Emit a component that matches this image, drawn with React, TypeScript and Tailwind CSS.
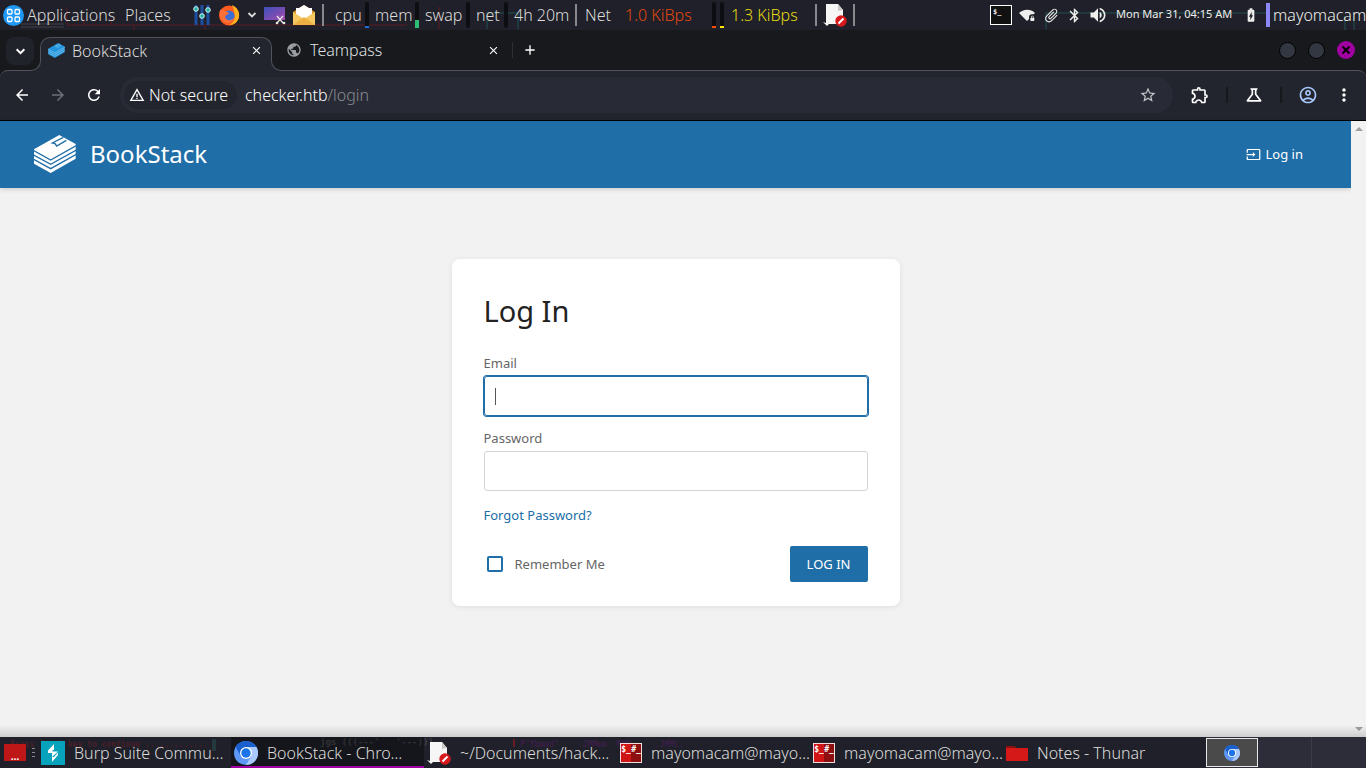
import { useState } from "react";
import type { ReactNode } from "react";
import {
  MdAdd, MdArrowBack, MdArrowForward, MdAttachFile, MdBatteryChargingFull, MdBluetooth, MdClose,
  MdInput, MdMoreVert, MdOutlineAccountCircle, MdOutlineExtension, MdOutlineScience, MdPublic,
  MdRefresh, MdSignalWifi4BarLock, MdStarBorder, MdVolumeUp, MdWarningAmber,
} from "react-icons/md";

function StackLogo({ className, line }: { className: string; line: string }) {
  return (
    <svg viewBox="0 0 126 114" className={className} fill="none" aria-hidden="true">
      <path d="M76 0 125 27V71L50 114 0 86V43Z" fill="currentColor" />
      <path d="M-1 47 50 75 127 32M-1 60 50 88 127 45M-1 73 50 101 127 58" stroke={line} strokeWidth="4" />
      <path d="M88 7 55 24 63 26 68 33 97 16" stroke={line} strokeWidth="4" />
    </svg>
  );
}

function FirefoxIcon() {
  return (
    <svg viewBox="0 0 22 22" className="size-[22px]" aria-hidden="true">
      <circle cx="11" cy="11.5" r="10" fill="#ff5a1f" />
      <path d="M14 1c5 2 8 7 7 12-1 5-5 8-10 8 6-3 8-8 3-20Z" fill="#ffb01f" />
      <circle cx="11" cy="12" r="5.5" fill="#3b6fd6" />
      <path d="M2 6c4-1 6 2 9 3-1 2-4 2-4 4 1 4 6 4 9 1-1 5-8 7-12 2C2 14 1 10 2 6Z" fill="#ff7139" />
    </svg>
  );
}

function SlidersIcon() {
  return (
    <svg viewBox="0 0 18 22" className="h-[22px] w-[18px]" aria-hidden="true">
      <path d="M3 1v20M9 1v20M15 1v20" stroke="#1d4fa0" strokeWidth="3" />
      <g fill="#21b3a8" stroke="#d7f2f0" strokeWidth="1">
        <circle cx="3" cy="5" r="2.3" /><circle cx="9" cy="12" r="2.3" /><circle cx="15" cy="6" r="2.3" />
      </g>
    </svg>
  );
}

function ScreenshotIcon() {
  return (
    <svg viewBox="0 0 22 20" className="h-5 w-[22px]" aria-hidden="true">
      <defs>
        <linearGradient id="shot" x1="0" y1="0" x2="1" y2="1">
          <stop offset="0" stopColor="#3b50b8" /><stop offset="1" stopColor="#a64bb0" />
        </linearGradient>
      </defs>
      <rect x="0" y="2" width="21" height="13" fill="url(#shot)" />
      <path d="m13 11 6 7m0-7-6 7" stroke="#e6e6e6" strokeWidth="1.3" />
      <circle cx="13" cy="18" r="1.3" fill="#e6e6e6" /><circle cx="20" cy="18" r="1.3" fill="#e6e6e6" />
    </svg>
  );
}

function MailIcon() {
  return (
    <svg viewBox="0 0 22 22" className="size-[22px]" aria-hidden="true">
      <path d="M0 8 11 1l11 7v13H0Z" fill="#d99a2b" />
      <path d="M3 4h16v12H3Z" fill="#fff" />
      <path d="M6 4 11 1l5 3Z" fill="#fff" />
      <path d="m0 8 11 7 11-7v13H0Z" fill="#f6c862" />
      <path d="m0 21 11-8 11 8Z" fill="#eeb040" />
    </svg>
  );
}

function DocIcon() {
  return (
    <svg viewBox="0 0 24 24" className="size-6" aria-hidden="true">
      <path d="M3 1h12l5 6v14H6l-2 2-4-4 3 1Z" fill="#f6f6f6" />
      <path d="m15 1 5 6-5 1Z" fill="#c9c9c9" />
      <circle cx="18" cy="18" r="5.700" fill="#d7191c" />
      <path d="m15.500 20.500 5-5" stroke="#fff" strokeWidth="2" />
    </svg>
  );
}

function RootTerminalIcon() {
  return (
    <span aria-hidden="true" className="flex h-5 w-[22px] shrink-0 border border-[#f3dede] font-['DejaVu_Sans_Mono',monospace] text-[8px] leading-[11px] font-bold text-white">
      <span className="flex-1 bg-[#cf1515] text-center">$_</span>
      <span className="flex-1 bg-[#8d0f0f] text-center">#_</span>
    </span>
  );
}

function ChromiumIcon({ className }: { className: string }) {
  return (
    <svg viewBox="0 0 24 24" className={className} aria-hidden="true">
      <circle cx="12" cy="12" r="12" fill="#5f97f6" />
      <path d="M1.600 6A12 12 0 0 1 22.400 6H12L6.800 15Z" fill="#1a5fce" />
      <path d="M22.400 6A12 12 0 0 1 12 24l5.200-9L12 6Z" fill="#a9c8fb" />
      <circle cx="12" cy="12" r="6" fill="#fff" />
      <circle cx="12" cy="12" r="4.700" fill="#1a73e8" />
    </svg>
  );
}

function BurpIcon() {
  return (
    <svg viewBox="0 0 24 24" className="size-6" aria-hidden="true">
      <path d="M0 0h24v24H0Z" fill="#07a3bd" />
      <path d="M13 3v6h-1.500v1.500H17L11 16v-4H7V9.500ZM11 21v-5h2l4-4.500V14Z" fill="#fff" />
    </svg>
  );
}

function Chevron({ className }: { className: string }) {
  return (
    <svg viewBox="0 0 10 10" className={className} fill="none" stroke="currentColor" strokeWidth="1.8" aria-hidden="true">
      <path d="m1.500 3 3.500 3.500L8.500 3" />
    </svg>
  );
}

function Separator() {
  return <span className="h-[22px] w-[2px] shrink-0 bg-[#88898d]" />;
}

function Meter({ level }: { level: string }) {
  return (
    <span className="flex h-[26px] w-1 shrink-0 items-end rounded-sm bg-[#0d0e11]">
      <span className={`w-full ${level}`} />
    </span>
  );
}

function Stat({ label, level, width }: { label: string; level: string; width: string }) {
  return (
    <span className={`flex shrink-0 items-center justify-between ${width}`}>
      {label}
      <Meter level={level} />
    </span>
  );
}

function TopPanel() {
  return (
    <header className="relative flex h-[30px] items-center justify-between overflow-hidden bg-[#1f2029] whitespace-nowrap">
      <svg className="absolute inset-0 h-[30px] w-[1366px]" fill="none" aria-hidden="true">
        <path d="M21 24h43M21 27h43" stroke="#44454b" strokeWidth="1" />
        <path d="M67 7v18M134 25v5M84 18v8M111 18v8M67 25h340M205 25v5M439 7v22" stroke="#3d1d26" strokeWidth="2" />
        <path d="M487 29V13h31v16M1046 29V13h220M1345 16v14M1354 16v14" stroke="#20393e" strokeWidth="2" />
      </svg>
      <div className="relative flex items-center">
        <button className="flex items-center gap-[3px] pl-[3px]">
          <svg viewBox="0 0 21 21" className="size-[21px]" aria-hidden="true">
            <circle cx="10.500" cy="10.500" r="10.500" fill="#1f97f4" />
            <g fill="none" stroke="#fff" strokeWidth="1.300">
              <rect x="4.500" y="4.500" width="4.500" height="4.500" rx="1" /><rect x="12" y="4.500" width="4.500" height="4.500" rx="1" />
              <rect x="4.500" y="12" width="4.500" height="4.500" rx="1" /><rect x="12" y="12" width="4.500" height="4.500" rx="1" />
            </g>
          </svg>
          <span className="w-[98px] text-left">Applications</span>
        </button>
        <button className="w-[68px] text-left">Places</button>
        <div className="flex w-[129px] items-center gap-[7px]">
          <SlidersIcon />
          <FirefoxIcon />
          <Chevron className="size-[10px]" />
          <ScreenshotIcon />
          <MailIcon />
        </div>
        <Separator />
        <div className="ml-[11px] flex items-center gap-[6px]">
          <Stat label="cpu" level="h-[2px] bg-[#1d6fd8]" width="w-[34px]" />
          <Stat label="mem" level="h-2 bg-[#2dbd74]" width="w-11" />
          <Stat label="swap" level="h-0" width="w-[45px]" />
          <Stat label="net" level="h-0" width="w-[32px]" />
          <span className="w-[61px]">4h 20m</span>
        </div>
        <div className="flex items-center">
          <Separator />
          <span className="ml-2 w-10">Net</span>
          <span className="w-[87px] text-[#e2480f]">1.0 KiBps</span>
          <span className="flex w-[19px] gap-1">
            <Meter level="h-[2px] bg-[#ff4d00]" />
            <Meter level="h-[2px] bg-[#ffe600]" />
          </span>
          <span className="w-[84px] text-[#e4d911]">1.3 KiBps</span>
          <Separator />
          <span className="mx-[6px]"><DocIcon /></span>
          <Separator />
        </div>
      </div>
      <div className="relative flex items-center text-[#eeeeec]">
        <span className="mr-[7px] h-5 w-[22px] border border-white bg-[#111] pl-[2px] font-['DejaVu_Sans_Mono',monospace] text-[7px] leading-[12px] font-bold">$_</span>
        <MdSignalWifi4BarLock className="mr-2 size-4" />
        <MdAttachFile className="mr-[6px] size-[17px] rotate-45" />
        <MdBluetooth className="mr-[5px] size-[17px]" />
        <MdVolumeUp className="mr-2 size-5" />
        <time className="mr-[7px] w-[120px] pb-[2px] font-['Noto_Sans',sans-serif] text-[11px] leading-4 font-normal">Mon Mar 31, 04:15 AM</time>
        <MdBatteryChargingFull className="mr-[7px] size-4" />
        <span className="mr-[3px] h-6 w-1 bg-[#8b87f5]" />
        <span className="w-[93px]">mayomacam</span>
      </div>
    </header>
  );
}

function TabStrip() {
  return (
    <div className="flex h-10 items-end bg-[#18191d]">
      <div className="mb-[5px] ml-[6px] flex w-[34px]">
        <button aria-label="Search tabs" className="grid size-7 place-items-center rounded-lg bg-[#21232b] text-white">
          <Chevron className="size-[11px]" />
        </button>
      </div>
      <div className="relative z-10 -mb-px flex h-[34px] w-[232px] items-center rounded-t-[10px] border border-b-0 border-[#50535a] bg-[#23252e] pr-[8px] pb-[8px] pl-[7px]">
        <span className="absolute bottom-0 -left-[10px] size-[10px] bg-[#23252e]">
          <span className="block size-[10px] rounded-br-[10px] border-r border-b border-[#50535a] bg-[#18191d]" />
        </span>
        <span className="absolute -right-[10px] bottom-0 size-[10px] bg-[#23252e]">
          <span className="block size-[10px] rounded-bl-[10px] border-b border-l border-[#50535a] bg-[#18191d]" />
        </span>
        <StackLogo className="mr-[7px] h-[15px] w-[17px] text-[#2295dc]" line="#9dd2f3" />
        <span className="flex-1">BookStack</span>
        <button aria-label="Close BookStack tab" className="text-white"><MdClose className="size-[13px]" /></button>
      </div>
      <div className="flex h-10 w-[241px] items-center pl-[14px] text-[#dfe0e2]">
        <MdPublic className="mr-2 size-4 text-[#9a9da2]" />
        <span className="flex-1">Teampass</span>
        <button aria-label="Close Teampass tab" className="mr-3 text-white"><MdClose className="size-[13px]" /></button>
        <span className="h-4 w-px bg-[#2d2f38]" />
      </div>
      <div className="flex h-10 flex-1 items-center justify-between pr-[11px] pl-[9px]">
        <button aria-label="New tab" className="text-white"><MdAdd className="size-4" /></button>
        <div className="flex items-center gap-3">
          <button aria-label="Minimize" className="size-[17px] rounded-full border border-black bg-[#333741]" />
          <button aria-label="Maximize" className="size-[17px] rounded-full border border-black bg-[#333741]" />
          <button aria-label="Close" className="grid size-[18px] place-items-center rounded-full bg-[#a0009f] text-black">
            <svg viewBox="0 0 8 8" className="size-2" stroke="currentColor" strokeWidth="2" aria-hidden="true"><path d="m.500.500 7 7m0-7-7 7" /></svg>
          </button>
        </div>
      </div>
    </div>
  );
}

function Toolbar() {
  return (
    <div className="bg-[#18191d]">
      <div className="flex h-[51px] items-center rounded-t-lg border-t border-b border-t-[#50535a] border-b-black bg-[#23252e] pr-3 pb-[2px] pl-[13px] text-white">
        <div className="flex w-[107px] items-center gap-[18px]">
          <button aria-label="Back"><MdArrowBack className="size-[18px]" /></button>
          <button aria-label="Forward" className="text-[#6d7078]"><MdArrowForward className="size-[18px]" /></button>
          <button aria-label="Reload"><MdRefresh className="size-[18px]" /></button>
        </div>
        <div className="flex h-9 flex-1 items-center rounded-full bg-[#282a35] pr-4 pl-1">
          <button className="flex h-7 w-[113px] items-center gap-1 rounded-full bg-[#23252e] pl-[5px] whitespace-nowrap"><MdWarningAmber className="size-4 shrink-0" />Not secure</button>
          <span className="ml-2 flex-1 text-white">checker.htb<span className="text-[#8a8c93]">/login</span></span>
          <button aria-label="Bookmark this page" className="text-[#c5c6ca]"><MdStarBorder className="size-[18px]" /></button>
        </div>
        <div className="flex items-center pl-[17px]">
          <button aria-label="Extensions"><MdOutlineExtension className="size-5" /></button>
          <span className="mx-4 h-4 w-[2px] bg-[#17181c]" />
          <button aria-label="Labs"><MdOutlineScience className="size-5" /></button>
          <span className="mx-4 h-4 w-[2px] bg-[#17181c]" />
          <button aria-label="Profile" className="text-[#a8c7fa]"><MdOutlineAccountCircle className="size-5" /></button>
          <button aria-label="Menu" className="ml-4"><MdMoreVert className="size-5" /></button>
        </div>
      </div>
    </div>
  );
}

function LoginPage() {
  const [email, setEmail] = useState("");
  const [password, setPassword] = useState("");
  return (
    <div className="relative flex flex-1 bg-[#f2f2f2] font-['Noto_Sans',sans-serif] text-[13px] font-normal text-[#666]">
      <div className="flex flex-1 flex-col">
        <header className="flex h-[67px] items-center justify-between bg-[#206ea7] pr-12 pb-px pl-[34px] text-white shadow-[0_1px_5px_rgba(0,0,0,0.18)]">
          <a href="#home" className="flex items-center gap-[14px] text-2xl">
            <StackLogo className="h-[38px] w-[42px]" line="#206ea7" />
            BookStack
          </a>
          <a href="#login" className="flex items-center gap-[5px]"><MdInput className="size-[15px]" />Log in</a>
        </header>
        <main className="flex flex-1 justify-center pt-[71px] pb-16">
          <form onSubmit={(e) => e.preventDefault()} className="w-[448px] self-start rounded-lg bg-white px-8 pt-8 pb-6 shadow-[0_1px_6px_rgba(0,0,0,0.08)]">
            <h1 className="mb-6 text-[29px] leading-10 text-[#222]">Log In</h1>
            <label htmlFor="email" className="block leading-4">Email</label>
            <div className="relative mt-[5px] mb-[14px]">
              <input id="email" type="text" value={email} onChange={(e) => setEmail(e.target.value)} className="block h-10 w-full rounded-[3px] border border-[#206ea7] px-[10px] caret-transparent ring-1 ring-[#206ea7] outline-none" />
              {email === "" && <span className="absolute top-3 left-[11px] h-[17px] w-px bg-[#555]" />}
            </div>
            <label htmlFor="password" className="block leading-4">Password</label>
            <input id="password" type="password" value={password} onChange={(e) => setPassword(e.target.value)} className="mt-[5px] block h-10 w-full rounded-[3px] border border-[#d4d4d4] px-[10px] outline-none" />
            <a href="#forgot" className="mt-[14px] block w-fit leading-5 text-[#206ea7]">Forgot Password?</a>
            <div className="mt-[21px] flex items-center justify-between">
              <label className="flex items-center gap-3 pb-px pl-[3px]">
                <input type="checkbox" className="size-4 appearance-none rounded-[2px] border-2 border-[#206ea7] checked:bg-[#206ea7]" />
                Remember Me
              </label>
              <button type="submit" className="h-9 w-[78px] rounded-[2px] bg-[#206ea7] text-white">LOG IN</button>
            </div>
          </form>
        </main>
      </div>
      <div aria-hidden="true" className="flex w-[15px] flex-col items-center justify-between bg-[#f2f2f2] py-[6px]">
        <span className="size-0 border-x-4 border-b-4 border-x-transparent border-b-[#a0a0a0]" />
        <span className="size-0 border-x-4 border-t-4 border-x-transparent border-t-[#a0a0a0]" />
      </div>
      <div className="pointer-events-none absolute inset-x-0 bottom-0 h-3 bg-linear-to-b from-transparent to-black/15" />
    </div>
  );
}

function Task({ icon, label, active = false }: { icon: ReactNode; label: string; active?: boolean }) {
  return (
    <button className={`flex h-full w-[193px] shrink-0 items-center gap-[9px] pl-[3px] ${active ? "border-b-2 border-[#a0009f] bg-black/30 pt-[2px]" : ""}`}>
      {icon}
      <span>{label}</span>
    </button>
  );
}

function Taskbar() {
  return (
    <footer className="relative flex h-[31px] items-center overflow-hidden bg-[#1f2029] whitespace-nowrap">
      <div aria-hidden="true" className="absolute inset-0 font-['DejaVu_Sans_Mono',monospace] leading-[14px] font-bold whitespace-pre">
        <span className="absolute top-px left-[10px] text-[8px] text-[#4a1f29]">{"Press [   ] key to continue ............."}</span>
        <span className="absolute top-[2px] left-[212px] h-3 w-1 bg-[#23393d]" />
        <span className="absolute -top-[2px] left-[320px] text-[9px] text-[#44454b]">{"jgs (((---'   '---)))"}</span>
        <span className="absolute top-px left-[520px] text-[8px] text-[#3b1f47]">{"P\"Ybmmd\"    .JMMmm  MMM     .JMML."}</span>
        <span className="absolute top-[2px] left-[513px] h-2 w-[2px] bg-[#6b1c22]" />
      </div>
      <div className="relative flex h-full flex-1 items-center">
        <span className="ml-1 flex h-[17px] w-[22px] items-end justify-center rounded-[1px] bg-[#bf1717] text-[10px] leading-[10px] font-bold text-white">…</span>
        <span className="mr-[3px] ml-[6px] flex w-[3px] flex-col gap-[3px]">
          <span className="h-px bg-[#8b8c90]" /><span className="h-px bg-[#8b8c90]" /><span className="h-px bg-[#8b8c90]" />
        </span>
        <Task icon={<BurpIcon />} label="Burp Suite Commu…" />
        <Task icon={<ChromiumIcon className="size-6" />} label="BookStack - Chro…" active />
        <Task icon={<DocIcon />} label="~/Documents/hack…" />
        <Task icon={<RootTerminalIcon />} label="mayomacam@mayo…" />
        <Task icon={<RootTerminalIcon />} label="mayomacam@mayo…" />
        <Task
          icon={<svg viewBox="0 0 22 16" className="h-4 w-[22px]" aria-hidden="true"><path d="M0 1h8l2 2h12v13H0Z" fill="#d51818" /><path d="M0 1h8l2 2H0Z" fill="#8f1010" /></svg>}
          label="Notes - Thunar"
        />
      </div>
      <div className="relative flex h-full w-40 bg-[#2c2d38]">
        <button aria-label="Workspace 1" className="mt-px grid h-[29px] w-[52px] place-items-center border border-[#e8e8e8] bg-[#4a4a4a]"><ChromiumIcon className="size-4" /></button>
        <button aria-label="Workspace 2" className="w-[54px] border-r border-[#3b3c47]" />
        <button aria-label="Workspace 3" className="flex-1" />
      </div>
    </footer>
  );
}

export default function App() {
  return (
    <div className="flex min-h-screen flex-col bg-[#18191d] font-['Noto_Sans',sans-serif] text-base leading-5 font-[340] text-[#dcdcda]">
      <TopPanel />
      <TabStrip />
      <Toolbar />
      <LoginPage />
      <Taskbar />
    </div>
  );
}
